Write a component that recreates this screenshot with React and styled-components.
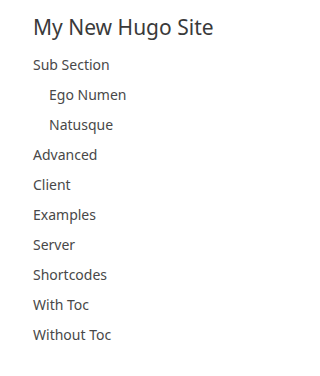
import React from "react";
import styled, { createGlobalStyle } from "styled-components";

const GlobalStyle = createGlobalStyle`
  html, body {
    margin: 0;
    padding: 0;
    background: #fff;
  }
  body {
    font-family: "Noto Sans", "Open Sans", sans-serif;
  }
`;

const Sidebar = styled.nav`
  padding: 12px 16px 0 33px;
`;

const Title = styled.h1`
  margin: 0 0 8px;
  font-size: 21px;
  font-weight: 400;
  line-height: 30px;
  color: #3a3a3a;
`;

const Menu = styled.ul`
  list-style: none;
  margin: 0;
  padding: 0;
`;

const Item = styled.li`
  padding-left: ${(p) => (p.$depth ? p.$depth * 16 : 0)}px;
  font-size: 14px;
  line-height: 30px;
  color: #484848;
`;

const items = [
  { label: "Sub Section" },
  { label: "Ego Numen", depth: 1 },
  { label: "Natusque", depth: 1 },
  { label: "Advanced" },
  { label: "Client" },
  { label: "Examples" },
  { label: "Server" },
  { label: "Shortcodes" },
  { label: "With Toc" },
  { label: "Without Toc" },
];

export default function App() {
  return (
    <>
      <GlobalStyle />
      <Sidebar>
        <Title>My New Hugo Site</Title>
        <Menu>
          {items.map((it) => (
            <Item key={it.label} $depth={it.depth}>
              {it.label}
            </Item>
          ))}
        </Menu>
      </Sidebar>
    </>
  );
}
